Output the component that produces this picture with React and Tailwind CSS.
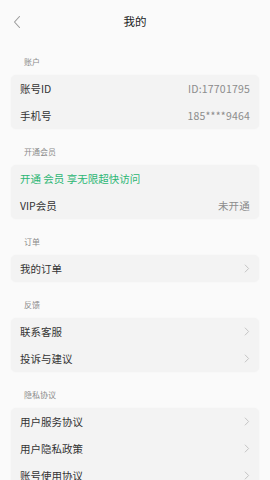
import React from "react";

const font = { fontFamily: '"Noto Sans CJK SC", "Noto Sans", sans-serif' };

function Chevron() {
  return (
    <svg width="6" height="9" viewBox="0 0 6 9" className="shrink-0">
      <path d="M1.2 1 L4.6 4.5 L1.2 8" fill="none" stroke="#c4c4c4" strokeWidth="1" strokeLinecap="round" strokeLinejoin="round" />
    </svg>
  );
}

function Row({ label, value, arrow, green }) {
  return (
    <div className="flex h-[27px] items-center justify-between px-[9px]">
      <span className={green ? "text-[10.5px] text-[#2bb673]" : "text-[10.5px] text-[#333333]"}>{label}</span>
      {value && <span className="text-[10.5px] tracking-[0.2px] text-[#8c8c8c]">{value}</span>}
      {arrow && <Chevron />}
    </div>
  );
}

function Section({ title, first, children }) {
  return (
    <div>
      <div className={(first ? "pt-[12px]" : "pt-[17px]") + " pb-[7px] pl-[24px] text-[8px] leading-[12px] text-[#8a8a8a]"}>{title}</div>
      <div className="mx-[11px] overflow-hidden rounded-[5px] bg-[#f3f3f3] shadow-[0_0_2px_rgba(0,0,0,0.04)]">{children}</div>
    </div>
  );
}

export default function App() {
  return (
    <div style={font} className="h-[480px] w-[270px] overflow-hidden bg-[#fafafa]">
      <div className="relative flex h-[44px] items-center justify-center">
        <svg width="10" height="14" viewBox="0 0 10 14" className="absolute left-[12px] top-[15px]">
          <path d="M7.5 1.5 L2.5 7 L7.5 12.5" fill="none" stroke="#9a9a9a" strokeWidth="1.1" strokeLinecap="round" strokeLinejoin="round" />
        </svg>
        <span className="text-[11.5px] text-[#222222]">我的</span>
      </div>
      <Section title="账户" first>
        <Row label="账号ID" value="ID:17701795" />
        <Row label="手机号" value="185****9464" />
      </Section>
      <Section title="开通会员">
        <Row label="开通 会员 享无限超快访问" green />
        <Row label="VIP会员" value="未开通" />
      </Section>
      <Section title="订单">
        <Row label="我的订单" arrow />
      </Section>
      <Section title="反馈">
        <Row label="联系客服" arrow />
        <Row label="投诉与建议" arrow />
      </Section>
      <Section title="隐私协议">
        <Row label="用户服务协议" arrow />
        <Row label="用户隐私政策" arrow />
        <Row label="账号使用协议" arrow />
      </Section>
    </div>
  );
}
